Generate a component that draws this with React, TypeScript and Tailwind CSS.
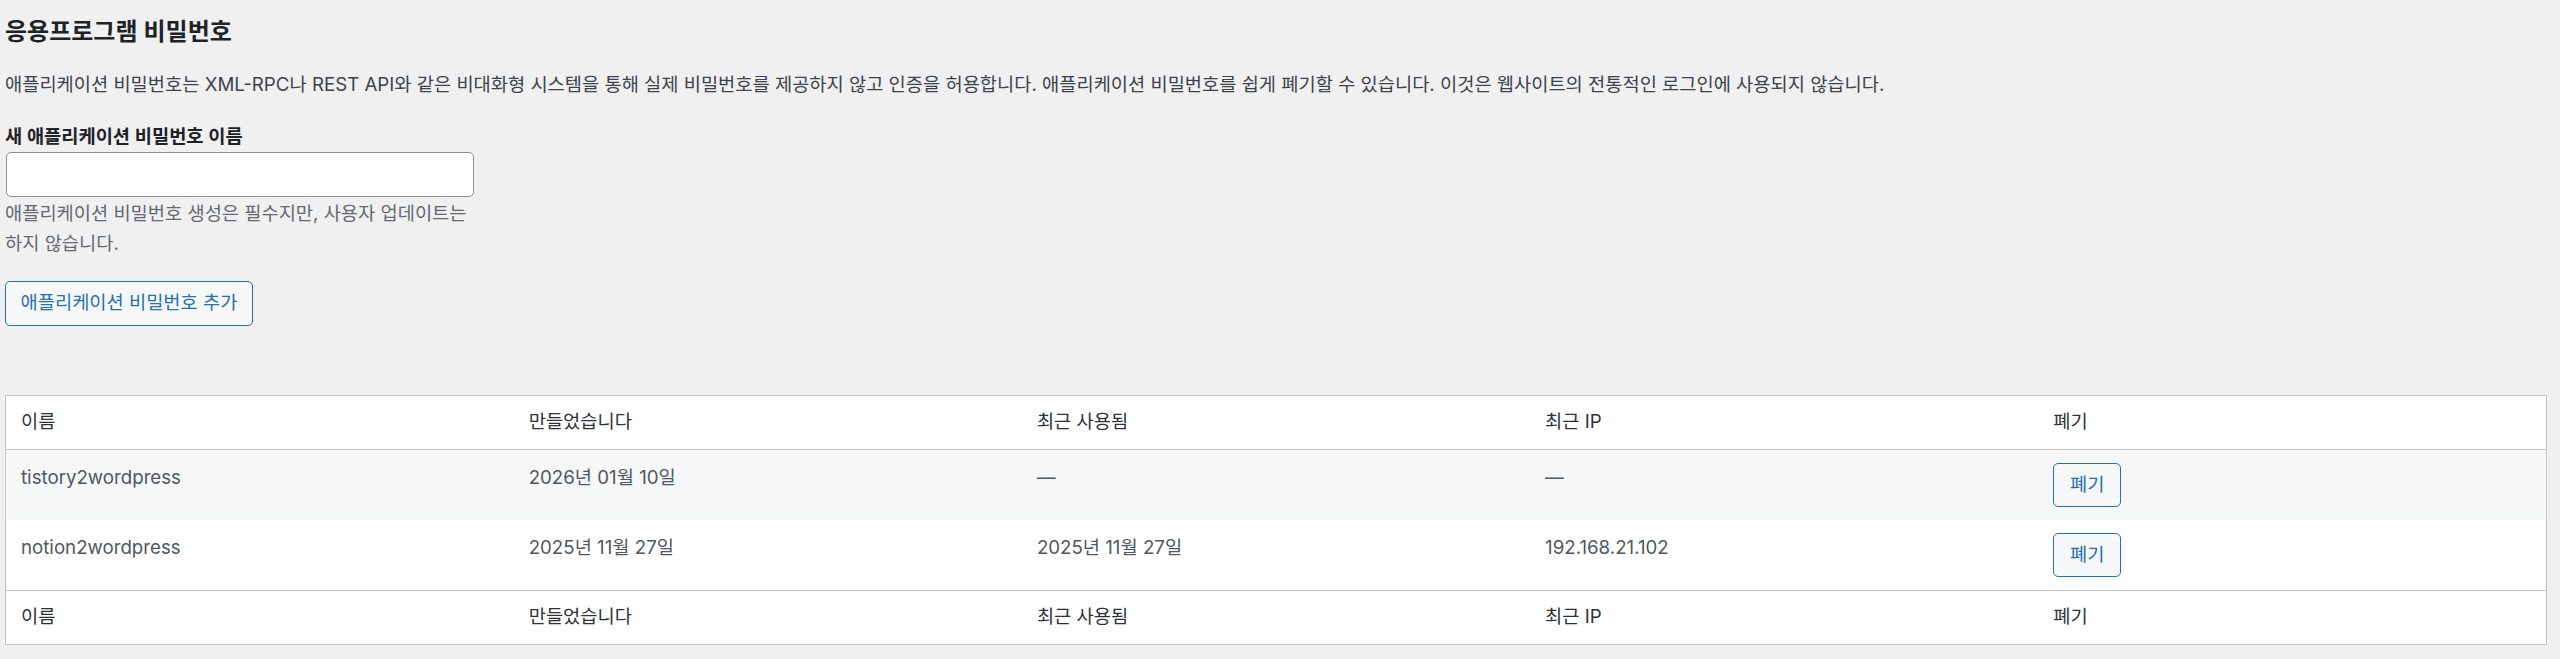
import React from "react";

const rows = [
  { name: "tistory2wordpress", created: "2026년 01월 10일", used: "—", ip: "—", alt: true },
  { name: "notion2wordpress", created: "2025년 11월 27일", used: "2025년 11월 27일", ip: "192.168.21.102", alt: false },
];

function HeadRow({ foot }: { foot?: boolean }) {
  const cls = "h-[54px] px-[15px] text-left font-normal align-middle text-[#2c3338]";
  return (
    <tr className={foot ? "border-t border-[#c3c4c7]" : "border-b border-[#c3c4c7]"}>
      <th className={cls}>이름</th>
      <th className={cls}>만들었습니다</th>
      <th className={cls}>최근 사용됨</th>
      <th className={cls}>최근 IP</th>
      <th className={cls}>폐기</th>
    </tr>
  );
}

export default function App() {
  return (
    <div
      className="min-h-[659px] bg-[#f0f0f1] pl-[5px] pr-[13px] pt-[16px] text-[18.7px] text-[#3c434a]"
      style={{ fontFamily: 'Inter, "Noto Sans CJK KR", sans-serif' }}
    >
      <h2 className="text-[24px] font-semibold leading-[32px] text-[#1d2327]">응용프로그램 비밀번호</h2>
      <p className="mt-[22px] leading-[30px]">
        애플리케이션 비밀번호는 XML-RPC나 REST API와 같은 비대화형 시스템을 통해 실제 비밀번호를 제공하지 않고 인증을 허용합니다. 애플리케이션 비밀번호를 쉽게 폐기할 수 있습니다. 이것은 웹사이트의 전통적인 로그인에 사용되지 않습니다.
      </p>
      <label className="mt-[22px] block font-semibold leading-[30px] text-[#1d2327]">새 애플리케이션 비밀번호 이름</label>
      <input
        type="text"
        className="ml-px block h-[45px] w-[468px] rounded-[5px] border border-[#8c8f94] bg-white"
      />
      <p className="mt-[2px] w-[475px] leading-[30px] text-[#646970]">
        애플리케이션 비밀번호 생성은 필수지만, 사용자 업데이트는 하지 않습니다.
      </p>
      <button className="mt-[22px] h-[45px] w-[248px] rounded-[5px] border border-[#2271b1] bg-[#f6f7f7] text-[#2271b1]">
        애플리케이션 비밀번호 추가
      </button>
      <table className="mt-[69px] w-full table-fixed border border-[#c3c4c7] bg-white">
        <thead>
          <HeadRow />
        </thead>
        <tbody>
          {rows.map((r) => (
            <tr key={r.name} className={r.alt ? "bg-[#f6f7f7]" : "bg-white"}>
              <td className="px-[15px] pt-[13px] pb-[13px] align-top leading-[30px] text-[#50575e]">{r.name}</td>
              <td className="px-[15px] pt-[13px] pb-[13px] align-top leading-[30px] text-[#50575e]">{r.created}</td>
              <td className="px-[15px] pt-[13px] pb-[13px] align-top leading-[30px] text-[#50575e]">{r.used}</td>
              <td className="px-[15px] pt-[13px] pb-[13px] align-top leading-[30px] text-[#50575e]">{r.ip}</td>
              <td className="px-[15px] pt-[13px] pb-[13px] align-top">
                <button className="h-[44px] w-[68px] rounded-[5px] border border-[#2271b1] bg-[#f6f7f7] text-[#2271b1]">
                  폐기
                </button>
              </td>
            </tr>
          ))}
        </tbody>
        <tfoot>
          <HeadRow foot />
        </tfoot>
      </table>
    </div>
  );
}
